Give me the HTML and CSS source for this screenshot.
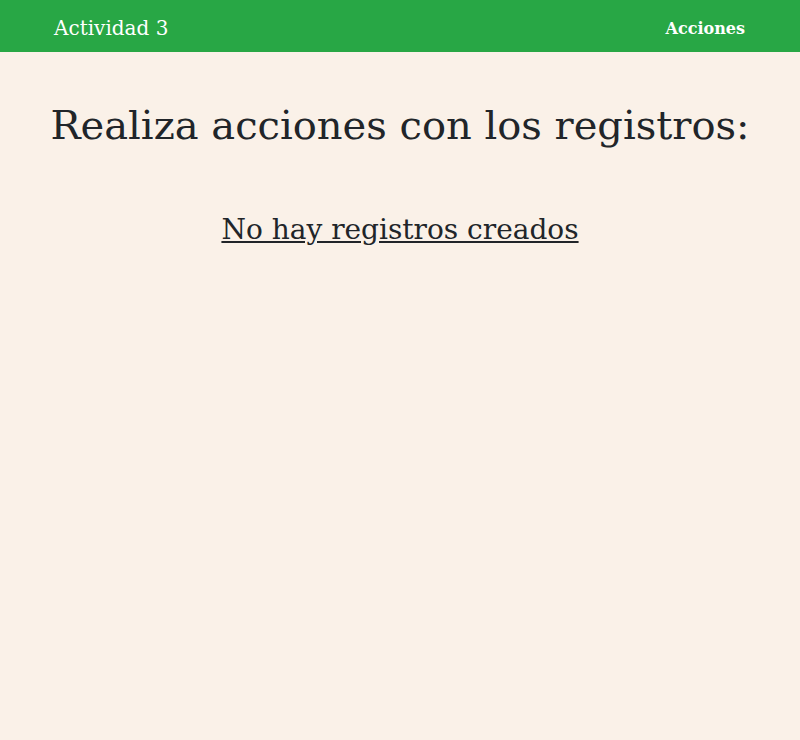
FILE: index.html
```html
<!DOCTYPE html>
<html lang="es">
<head>
<meta charset="utf-8">
<title>Actividad 3</title>
<link rel="stylesheet" href="styles.css">
</head>
<body>
<nav class="navbar">
  <div class="nav-inner">
    <a class="brand" href="#">Actividad 3</a>
    <a class="nav-link" href="#">Acciones</a>
  </div>
</nav>
<main class="content">
  <h1 class="title">Realiza acciones con los registros:</h1>
  <h3 class="empty">No hay registros creados</h3>
</main>
</body>
</html>
```
FILE: styles.css
```css
* { box-sizing: border-box; }
html, body { margin: 0; padding: 0; }
body {
  background: #faf1e8;
  font-family: "DejaVu Serif", serif;
  color: #212529;
  min-height: 740px;
}
.navbar {
  background: #28a745;
  height: 52px;
}
.nav-inner {
  max-width: 720px;
  margin: 0 auto;
  padding: 4px 15px 0;
  height: 100%;
  display: flex;
  align-items: center;
  justify-content: space-between;
}
.brand {
  color: #fff;
  text-decoration: none;
  font-size: 20px;
  margin-left: -1px;
}
.nav-link {
  color: #fff;
  text-decoration: none;
  font-weight: bold;
  font-size: 16px;
}
.content {
  text-align: center;
  padding-top: 49px;
}
.title {
  font-size: 40px;
  font-weight: normal;
  margin: 0;
  line-height: 1.2;
}
.empty {
  font-size: 28px;
  font-weight: normal;
  text-decoration: underline;
  margin: 64px 0 0;
  line-height: 1.2;
}
```
